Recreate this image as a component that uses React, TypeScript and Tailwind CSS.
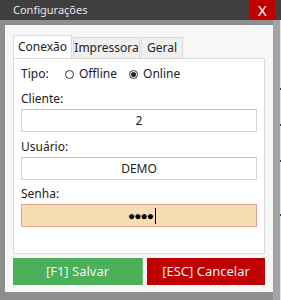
import { useState } from "react";

const font = { fontFamily: '"Noto Sans", "Open Sans", sans-serif' };

function Radio({ checked, label }: { checked: boolean; label: string }) {
  return (
    <label className="flex items-center gap-[5px]">
      <span className="flex h-[9px] w-[9px] items-center justify-center rounded-full border border-[#333] bg-white">
        {checked && <span className="h-[5px] w-[5px] rounded-full bg-[#222]" />}
      </span>
      <span>{label}</span>
    </label>
  );
}

export default function App() {
  const [tab] = useState("Conexão");
  const tabs = [
    { t: "Conexão", w: "w-[59px]" },
    { t: "Impressora", w: "w-[67px]" },
    { t: "Geral", w: "w-[42px]" },
  ];

  return (
    <div
      className="flex h-[300px] w-[281px] flex-col overflow-hidden bg-[#8e8e8e] text-[12px] text-[#222]"
      style={font}
    >
      {/* barra de título */}
      <div className="flex h-[20px] shrink-0 items-center justify-between bg-[#3f3f3f]">
        <span className="pl-[13px] text-[11px] text-[#e6e6e6]">Configurações</span>
        <span className="mr-[6px] flex h-full w-[25px] items-center justify-center bg-[#c00000] text-[15px] text-white">
          X
        </span>
      </div>

      <div className="flex flex-1">
        <div className="w-[5px] shrink-0" />
        <div className="mt-[5px] h-[267px] w-[268px] shrink-0 bg-[#f7f7f7] pl-[8px] pt-[11px]">
          {/* abas */}
          <div className="flex h-[22px] items-end">
            {tabs.map(({ t, w }) =>
              t === tab ? (
                <div
                  key={t}
                  className={`flex h-[23px] ${w} items-center justify-center border border-b-0 border-[#cfe0f0] bg-white`}
                >
                  {t}
                </div>
              ) : (
                <div
                  key={t}
                  className={`ml-[1px] flex h-[21px] ${w} items-center justify-center border border-b-0 border-[#dadada] bg-[#f0f0f0]`}
                >
                  {t}
                </div>
              ),
            )}
          </div>

          {/* conteúdo da aba */}
          <div className="h-[196px] w-[252px] border border-[#dadada] bg-white px-[7px] pt-[6px]">
            <div className="flex h-[18px] items-center">
              <span className="w-[44px]">Tipo:</span>
              <div className="flex gap-[12px]">
                <Radio checked={false} label="Offline" />
                <Radio checked label="Online" />
              </div>
            </div>

            <div className="mt-[7px] flex h-[18px] items-center">Cliente:</div>
            <div className="mt-[1px] flex h-[23px] w-[236px] items-center justify-center border border-[#d4d4d4] border-t-[#c4c4c4]">
              2
            </div>

            <div className="mt-[6px] flex h-[18px] items-center">Usuário:</div>
            <div className="mt-[1px] flex h-[23px] w-[236px] items-center justify-center border border-[#d4d4d4] border-t-[#c4c4c4]">
              DEMO
            </div>

            <div className="mt-[5px] flex h-[18px] items-center">Senha:</div>
            <div className="mt-[1px] flex h-[23px] w-[236px] items-center justify-center border border-[#e3a28e] bg-[#f6deb4]">
              <span className="pl-[6px] text-[12px] tracking-[-1px] text-black">●●●●</span>
              <span className="ml-[2px] h-[16px] w-[1px] bg-black" />
            </div>
          </div>

          {/* botões */}
          <div className="mt-[4px] flex gap-[4px]">
            <button className="flex h-[27px] w-[130px] items-center justify-center border-r border-[#6cc274] bg-[#4caf5a] text-[13px] text-[#f0f0f0]">
              [F1] Salvar
            </button>
            <button className="flex h-[27px] w-[118px] items-center justify-center bg-[#c00000] text-[13px] text-[#f0f0f0]">
              [ESC] Cancelar
            </button>
          </div>
        </div>
        <div className="h-full w-[7px] shrink-0 bg-[#a3a3a3]" />
        <div className="flex h-full w-[1px] shrink-0 flex-col bg-[#dfe6ec] pt-[68px]">
          <span className="h-[2px] bg-[#444]" />
          <span className="mt-[34px] h-[2px] bg-[#444]" />
          <span className="mt-[34px] h-[2px] bg-[#444]" />
          <span className="mt-[52px] h-[2px] bg-[#444]" />
        </div>
      </div>
    </div>
  );
}
